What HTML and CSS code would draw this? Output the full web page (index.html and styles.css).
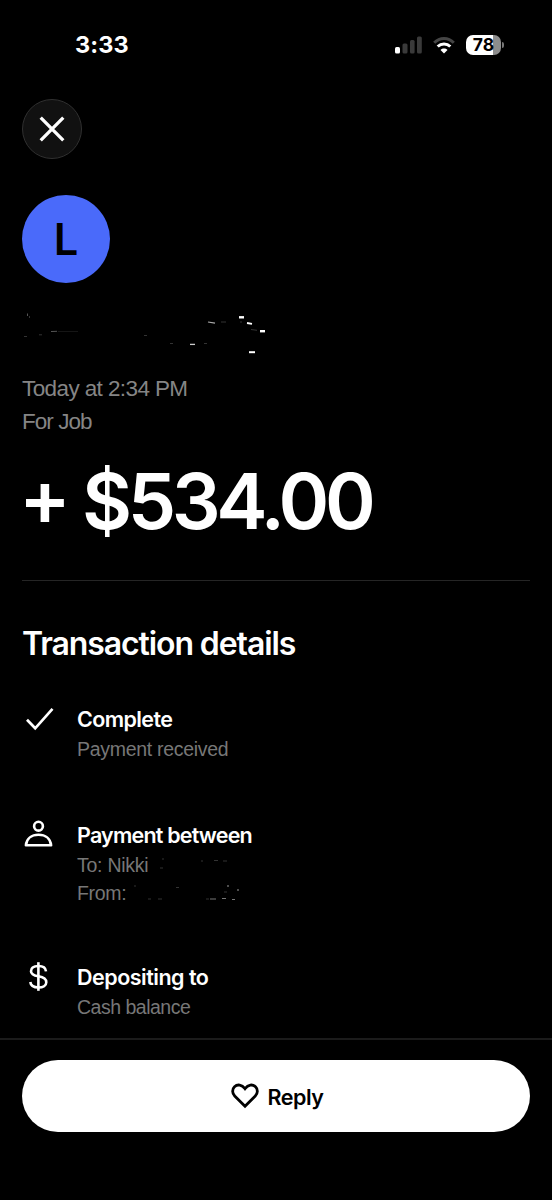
FILE: index.html
```html
<!DOCTYPE html>
<html lang="en">
<head>
<meta charset="utf-8">
<title>Transaction</title>
<link rel="stylesheet" href="styles.css">
</head>
<body>
<div class="screen">
  <header class="status">
    <span class="time">3:33</span>
    <div class="indicators">
      <svg class="signal" width="28" height="18" viewBox="0 0 28 18"><rect x="0" y="11" width="5" height="6.5" rx="1.5" fill="#fff"/><g fill="#3a3a3a"><rect x="7.5" y="7.5" width="5" height="10" rx="1.5"/><rect x="15" y="4" width="4.6" height="13.5" rx="1.5"/><rect x="22" y="0.5" width="4.8" height="17" rx="1.5"/></g></svg>
      <svg class="wifi" width="22" height="17" viewBox="0 0 22 17"><path d="M1.2 5.8C6.8.1 15.2.1 20.8 5.8" fill="none" stroke="#454545" stroke-width="3"/><path d="M4.7 9.5c3.6-3.5 9-3.5 12.6 0" fill="none" stroke="#fff" stroke-width="3"/><path d="M7.5 12.9c2-1.9 5-1.9 7 0L11 16.5z" fill="#fff"/></svg>
      <div class="battery"><span class="level">78</span></div>
      <i class="battery-tip"></i>
    </div>
  </header>
  <main>
    <button class="close" aria-label="Close"><svg width="26" height="26" viewBox="0 0 26 26"><path d="M1.700 1.700 24.300 24.300M24.300 1.700 1.700 24.300" stroke="#fff" stroke-width="3.3"/></svg></button>
    <div class="avatar">L</div>
    <svg class="name" width="260" height="46" viewBox="0 0 260 46">
      <g fill="none" stroke="#fff">
        <path d="M217 7.3h5" stroke-width="2.4"/><path d="M225 13l5 .8" stroke-width="1.8"/><path d="M238 21.2h5" stroke-width="2.4"/><path d="M227 42.2h6" stroke-width="2"/><path d="M186 12l7 1.2" stroke="#aaa" stroke-width="1.2"/><path d="M168 34.4h5" stroke="#ccc" stroke-width="1.3"/>
        <path d="M5.500 3.500v2.500M29 21.500l6-.2" stroke="#555" stroke-width="1"/>
        <path d="M7.500 6v2M2 26.500h3M17 24.800h3M122 25.500h3M148 33.500h3M182 33.500h3M199 12h5M218 12h2M229 19.500l6 .8" stroke="#333" stroke-width="1"/>
        <path d="M36 21.500h20" stroke="#151515"/>
      </g>
    </svg>
    <div class="meta">Today at 2:34 PM<br><span class="purpose">For Job</span></div>
    <div class="amount"><span class="sign">+</span><span>$534.00</span></div>
    <hr class="rule">
    <h1>Transaction details</h1>
    <section class="item">
      <svg class="icon" width="34" height="34" viewBox="0 0 34 34"><path d="M5 16.700 13.200 25.300 30.500 5.900" fill="none" stroke="#fff" stroke-width="2.700"/></svg>
      <div><h2>Complete</h2><p>Payment received</p></div>
    </section>
    <section class="item people">
      <svg class="icon" width="34" height="34" viewBox="0 0 34 34"><g fill="none" stroke="#fff" stroke-width="2.6"><circle cx="16.500" cy="7.200" r="4.400"/><path d="M3.900 26.300C4.600 19.500 9.700 15.800 16.500 15.800S28.400 19.500 29.100 26.300Z" stroke-linejoin="round"/></g></svg>
      <div><h2 class="w-between">Payment between</h2>
        <p class="w-to">To: Nikki<svg class="trace" width="100" height="20" viewBox="0 0 100 20"><path d="M14 4h2M12 13h3M53 6h2M66 5.500h4M75 6h4" stroke="#333"/></svg></p>
        <p class="from">From:<svg class="trace" width="120" height="20" viewBox="0 0 120 20"><path d="M3 3h2M17 16h3M27 16h4M45 4.500h3M75 16h3M93 9h3" stroke="#333"/><path d="M79 16h6M91 15.500h4M101 16.500h3" stroke="#777"/><path d="M96 3h2M106 7h2" stroke="#999"/></svg></p></div>
    </section>
    <section class="item deposit">
      <svg class="icon" width="34" height="34" viewBox="0 0 34 34"><g fill="none" stroke="#fff" stroke-width="2.600"><path d="M16.400 1.200V29.800"/><path d="M24 10.300C23.600 6.600 20.700 5 16.500 5 12 5 9 6.800 9 10.200 9 13.500 11.800 14.500 16.500 15.300 21.500 16.200 24.300 17.700 24.300 21.200 24.300 24.600 21 26.500 16.500 26.500 12.300 26.500 8.800 24.800 8.300 21"/></g></svg>
      <div><h2 class="w-deposit">Depositing to</h2><p class="w-cash">Cash balance</p></div>
    </section>
  </main>
  <footer>
    <button class="reply"><svg width="28" height="26" viewBox="0 0 28 26"><path d="M14 23.300 3.700 13C1 10.300 1 6.200 3.500 3.800 6.500.9 10.800 1.500 14 5.600 17.200 1.500 21.500.9 24.500 3.800 27 6.200 27 10.300 24.300 13Z" fill="none" stroke="#000" stroke-width="2.800"/></svg><span>Reply</span></button>
  </footer>
</div>
</body>
</html>
```
FILE: styles.css
```css
* { box-sizing: border-box; }
body { margin: 0; background: #000; color: #fff; font-family: Inter, "Liberation Sans", sans-serif; -webkit-font-smoothing: antialiased; }
svg { display: block; flex: none; }
button { border: 0; padding: 0; font: inherit; }
h1, h2, p { margin: 0; white-space: nowrap; }
.screen { width: 552px; height: 1200px; display: flex; flex-direction: column; overflow: hidden; }
.status { height: 99px; padding: 30px 48px 0 75px; display: flex; justify-content: space-between; align-items: flex-start; }
.time { font-size: 23.500px; line-height: 30px; font-weight: 700; letter-spacing: 0.1px; }
.indicators { height: 30px; display: flex; align-items: center; }
.wifi { margin: 0 11px 0 10px; }
.battery { width: 35px; height: 20px; border-radius: 7px; background: linear-gradient(90deg, #fff 78%, #8c8c8c 78%); display: flex; justify-content: center; align-items: center; color: #000; }
.level { font-size: 17.500px; line-height: 20px; font-weight: 700; }
.battery-tip { width: 2px; height: 6px; margin-left: 1px; border-radius: 0 2px 2px 0; background: #777; }
main { height: 939px; padding: 0 22px; display: flex; flex-direction: column; align-items: flex-start; }
.close { width: 60px; height: 60px; flex: none; border-radius: 50%; background: #111; border: 1px solid #303030; display: flex; align-items: center; justify-content: center; }
.avatar { width: 88px; height: 88px; flex: none; margin-top: 36px; border-radius: 50%; background: #4a6afa; color: #000; font-size: 43.500px; font-weight: 600; display: flex; align-items: center; justify-content: center; }
.name { margin-top: 27px; }
.meta { margin-top: 16px; font-family: "Liberation Sans", sans-serif; font-size: 22.500px; line-height: 33px; color: #858585; letter-spacing: -0.6px; white-space: nowrap; }
.purpose { letter-spacing: -0.95px; }
.amount { height: 100px; margin-top: 13px; display: flex; align-items: center; font-size: 77px; line-height: 100px; font-weight: 600; letter-spacing: -4.4px; }
.sign { width: 63px; height: 108px; margin-left: -3px; }
.rule { width: 100%; height: 1px; margin: 29px 0 0; border: 0; background: #252525; flex: none; }
h1 { height: 40px; margin-top: 43px; font-size: 32px; line-height: 40px; font-weight: 600; letter-spacing: -1.1px; }
.item { height: 58px; margin-top: 41px; display: flex; gap: 21px; }
.icon { margin-top: -2px; }
h2 { height: 30px; font-size: 21.500px; line-height: 28px; font-weight: 600; letter-spacing: -0.6px; }
p { height: 28px; display: flex; align-items: center; font-family: "Liberation Sans", sans-serif; font-size: 19.500px; line-height: 28px; color: #777; letter-spacing: -0.3px; }
.w-between { letter-spacing: -0.8px; }
.w-deposit { letter-spacing: -0.5px; }
.w-to { letter-spacing: -0.25px; }
.w-cash { letter-spacing: -0.5px; }
.people { height: 86px; margin-top: 58px; }
.deposit { margin-top: 56px; }
.trace { margin-left: 2px; }
.w-to .trace { margin-left: 0; }
.from .trace { margin-left: 5px; }
footer { height: 162px; border-top: 2px solid #1b1b1b; padding: 20px 22px 0; }
.reply { width: 100%; height: 72px; border-radius: 36px; background: #fff; color: #000; display: flex; align-items: center; justify-content: center; gap: 9px; padding-left: 2px; font-size: 21.500px; font-weight: 600; line-height: 30px; letter-spacing: -0.5px; }
.reply span { padding-top: 2px; }
```
